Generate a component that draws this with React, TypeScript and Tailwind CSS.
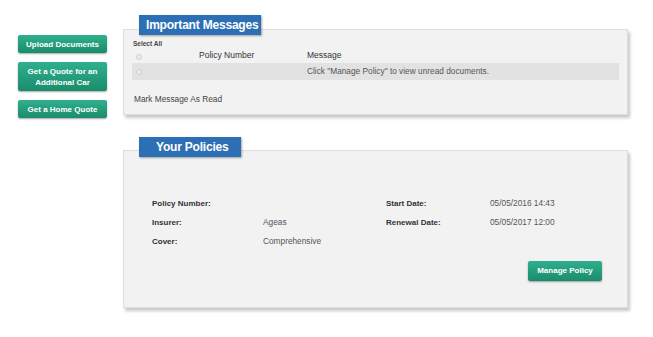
import React from 'react';

const font = { fontFamily: '"Liberation Sans", Arial, sans-serif' };

const SideButton: React.FC<{ children: React.ReactNode; className?: string }> = ({ children, className }) => (
  <button
    className={`w-[89px] rounded-[2px] bg-gradient-to-b from-[#2fb08e] to-[#1a8c6c] text-white text-[8px] font-bold leading-[11px] shadow-[0_1px_2px_rgba(0,0,0,0.35)] ${className ?? ''}`}
  >
    {children}
  </button>
);

const Tab: React.FC<{ title: string; className: string }> = ({ title, className }) => (
  <div
    className={`absolute bg-[#2c6fb5] text-white font-bold text-[12px] whitespace-nowrap tracking-[-0.2px] flex items-center shadow-[1px_1px_2px_rgba(0,0,0,0.35)] ${className}`}
  >
    {title}
  </div>
);

const Checkbox = () => (
  <span className="block w-[6px] h-[6px] rounded-full border border-[#d0d0d0] bg-[#ececec]" />
);

const Row: React.FC<{ label: string; value: string; w: string }> = ({ label, value, w }) => (
  <div className="flex h-[19px] items-center">
    <span className={`${w} font-bold text-[8px] text-[#333]`}>{label}</span>
    <span className="text-[#555]">{value}</span>
  </div>
);

export default function App() {
  return (
    <div className="w-[653px] h-[337px] bg-white flex text-[8.3px]" style={font}>
      <div className="flex flex-col pl-[18px] pt-[35px] gap-[9px]">
        <SideButton className="h-[18px]">Upload Documents</SideButton>
        <SideButton className="h-[29px] px-1">
          Get a Quote for an
          <br />
          Additional Car
        </SideButton>
        <SideButton className="h-[18px]">Get a Home Quote</SideButton>
      </div>

      <div className="ml-[16px] w-[505px] flex flex-col pt-[29px]">
        {/* Important Messages */}
        <div className="relative h-[86px] bg-[#f2f2f3] border border-[#dedede] shadow-[2px_3px_3px_rgba(0,0,0,0.22)] px-[8px] pt-[10px]">
          <Tab title="Important Messages" className="left-[15px] -top-[15px] w-[122px] h-[20px] pl-[7px]" />
          <div className="text-[6.5px] font-bold text-[#444] leading-[8px] ml-[1px]">Select All</div>
          <div className="flex items-center h-[15px] text-[#333]">
            <span className="w-[67px] pl-[4px] pt-[3px]">
              <Checkbox />
            </span>
            <span className="w-[108px] text-[8.5px]">Policy Number</span>
            <span className="text-[8.5px]">Message</span>
          </div>
          <div className="flex items-center h-[17px] bg-[#e2e2e3] text-[#555]">
            <span className="w-[175px] pl-[4px]">
              <Checkbox />
            </span>
            <span>Click "Manage Policy" to view unread documents.</span>
          </div>
          <div className="mt-[13px] ml-[2px] text-[#444]">Mark Message As Read</div>
        </div>

        {/* Your Policies */}
        <div className="relative mt-[35px] h-[158px] bg-[#f2f2f3] border border-[#dedede] shadow-[2px_3px_3px_rgba(0,0,0,0.22)] pl-[28px] pr-[25px] pt-[43px]">
          <Tab title="Your Policies" className="left-[15px] -top-[14px] w-[102px] h-[20px] pl-[17px]" />
          <div className="flex">
            <div className="w-[234px]">
              <Row w="w-[111px]" label="Policy Number:" value="" />
              <Row w="w-[111px]" label="Insurer:" value="Ageas" />
              <Row w="w-[111px]" label="Cover:" value="Comprehensive" />
            </div>
            <div>
              <Row w="w-[104px]" label="Start Date:" value="05/05/2016 14:43" />
              <Row w="w-[104px]" label="Renewal Date:" value="05/05/2017 12:00" />
            </div>
          </div>
          <div className="flex justify-end mt-[10px]">
            <button className="w-[74px] h-[20px] rounded-[2px] bg-gradient-to-b from-[#2fb08e] to-[#1a8c6c] text-white text-[8px] font-bold shadow-[0_1px_2px_rgba(0,0,0,0.35)]">
              Manage Policy
            </button>
          </div>
        </div>
      </div>
    </div>
  );
}
